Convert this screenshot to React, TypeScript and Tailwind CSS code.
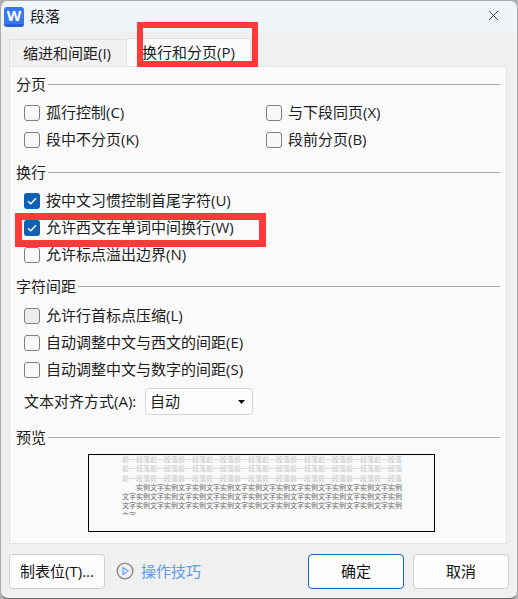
import React from "react";
import { X } from "lucide-react";

function Check({ checked, label, focus }: { checked?: boolean; label: string; focus?: boolean }) {
  return (
    <div className="flex h-[27px] items-center gap-[6px]">
      {checked ? (
        <div className="flex h-[16px] w-[16px] items-center justify-center rounded-[3px] bg-[#0f5fb5]">
          <svg width="10" height="8" viewBox="0 0 10 8" fill="none">
            <path d="M1 4.2 3.7 6.8 9 1.2" stroke="#fff" strokeWidth="1.3" />
          </svg>
        </div>
      ) : (
        <div
          className={`h-[16px] w-[16px] rounded-[3px] border border-[#808080] ${focus ? "bg-[#ececec]" : "bg-[#f8f8f8]"}`}
        />
      )}
      <span>{label}</span>
    </div>
  );
}

function Section({ title }: { title: string }) {
  return (
    <div className="flex h-[20px] items-center gap-[2px] pl-[6px] pr-[6px]">
      <span>{title}</span>
      <div className="h-px flex-1 bg-[#a8a8a8]" />
    </div>
  );
}

function Button({ label, primary }: { label: string; primary?: boolean }) {
  return (
    <button
      className={`h-[35px] w-[96px] rounded-[4px] border bg-[#fdfdfd] text-[15px] text-[#111] ${primary ? "border-[#0f6cbd]" : "border-[#cfcfcf]"}`}
    >
      {label}
    </button>
  );
}

const before = "前一段落".repeat(10);
const sample = "文字实例".repeat(10);

export default function App() {
  return (
    <div className="relative h-[599px] w-[518px] bg-[#b0b0b0] font-['Open_Sans','Noto_Sans_CJK_SC',sans-serif] text-[15px] text-[#1c1c1c]">
      <div className="flex h-full flex-col overflow-hidden rounded-[8px] border border-[#a9aca9] border-b-[#6a6a6a] bg-[#f0f0f0]">
        {/* title bar */}
        <div className="flex h-[31px] shrink-0 items-center bg-[#eff4f9] pl-[3px] pr-[15px]">
          <div className="mt-[1px] flex h-[20px] w-[20px] items-center justify-center rounded-[3px] border-b-[3px] border-[#2a5fd8] bg-[#3877f0] text-[15px] font-bold leading-none text-white">
            W
          </div>
          <span className="mb-[1px] ml-[6px] flex-1 text-[15px]">段落</span>
          <X size={17} strokeWidth={1.2} color="#222" className="-mt-[2px]" />
        </div>

        {/* tabs */}
        <div className="flex h-[34px] shrink-0 items-end pl-[8px]">
          <div className="flex h-[27px] w-[118px] items-center border border-b-0 border-[#e0e0e0] bg-[#f1f1f1] pl-[13px]">
            缩进和间距(I)
          </div>
          <div className="flex h-[28px] w-[124px] items-center justify-center border border-b-0 border-l-0 border-[#e0e0e0] bg-[#fafafa]">
            换行和分页(P)
          </div>
        </div>

        {/* panel */}
        <div className="ml-[8px] h-[478px] w-[498px] shrink-0 border border-[#e4e4e4] bg-[#fafafa] pt-[7px]">
          <Section title="分页" />
          <div className="mt-[5px] grid grid-cols-[242px_1fr] pl-[14px]">
            <Check label="孤行控制(C)" />
            <Check label="与下段同页(X)" />
            <Check label="段中不分页(K)" />
            <Check label="段前分页(B)" />
          </div>

          <div className="mt-[9px]">
            <Section title="换行" />
          </div>
          <div className="mt-[5px] pl-[14px]">
            <Check checked label="按中文习惯控制首尾字符(U)" />
            <Check checked label="允许西文在单词中间换行(W)" />
            <Check label="允许标点溢出边界(N)" />
          </div>

          <div className="mt-[8px]">
            <Section title="字符间距" />
          </div>
          <div className="mt-[6px] pl-[14px]">
            <Check focus label="允许行首标点压缩(L)" />
            <Check label="自动调整中文与西文的间距(E)" />
            <Check label="自动调整中文与数字的间距(S)" />
          </div>

          <div className="mt-[5px] flex items-center pl-[14px]">
            <span className="w-[121px] whitespace-nowrap">文本对齐方式(A):</span>
            <div className="flex h-[27px] w-[108px] items-center justify-between rounded-[4px] border border-[#d4d4d4] bg-[#fdfdfd] pl-[4px] pr-[7px]">
              <span>自动</span>
              <svg width="7" height="4" viewBox="0 0 7 4">
                <path d="M0 0h7L3.5 4z" fill="#111" />
              </svg>
            </div>
          </div>

          <div className="mt-[12px]">
            <Section title="预览" />
          </div>
          <div className="ml-[78px] mt-[7px] h-[78px] w-[347px] border border-black bg-[#fafafa] pl-[33px]">
            <div className="h-[60px] w-[280px] overflow-hidden text-[7px] leading-[9.3px] whitespace-nowrap font-['Noto_Sans_CJK_SC',sans-serif]">
              <div className="text-[#c4c4c4]">{before}</div>
              <div className="text-[#c4c4c4]">{before}</div>
              <div className="text-[#c4c4c4]">{before}</div>
              <div className="pl-[14px] text-[#666]">{sample.slice(2, 40)}</div>
              <div className="text-[#666]">{sample}</div>
              <div className="text-[#666]">{sample}</div>
              <div className="text-[#666]">文字</div>
            </div>
          </div>
        </div>

        {/* footer */}
        <div className="flex flex-1 items-center pl-[8px] pr-[8px]">
          <button className="h-[35px] w-[96px] rounded-[4px] border border-[#cfcfcf] bg-[#fdfdfd] text-[15px] text-[#111]">
            制表位(T)...
          </button>
          <svg className="ml-[11px]" width="18" height="18" viewBox="0 0 18 18" fill="none">
            <circle cx="9" cy="9" r="7.8" stroke="#8f8f8f" strokeWidth="1.6" />
            <path d="M7 5.5v7l5.2-3.5z" stroke="#6ea6f2" strokeWidth="1.4" strokeLinejoin="round" />
          </svg>
          <span className="ml-[7px] flex-1 text-[#5b9bf0]">操作技巧</span>
          <div className="flex gap-[9px]">
            <Button primary label="确定" />
            <Button label="取消" />
          </div>
        </div>
      </div>

      {/* red annotation boxes drawn over the dialog */}
      <div className="absolute left-[137px] top-[22px] h-[45px] w-[121px] border-x-[6px] border-y-[6px] border-[#fb3a3a]" />
      <div className="absolute left-[15px] top-[213px] h-[34px] w-[251px] border-x-[7px] border-y-[7px] border-[#fb3a3a]" />
    </div>
  );
}
